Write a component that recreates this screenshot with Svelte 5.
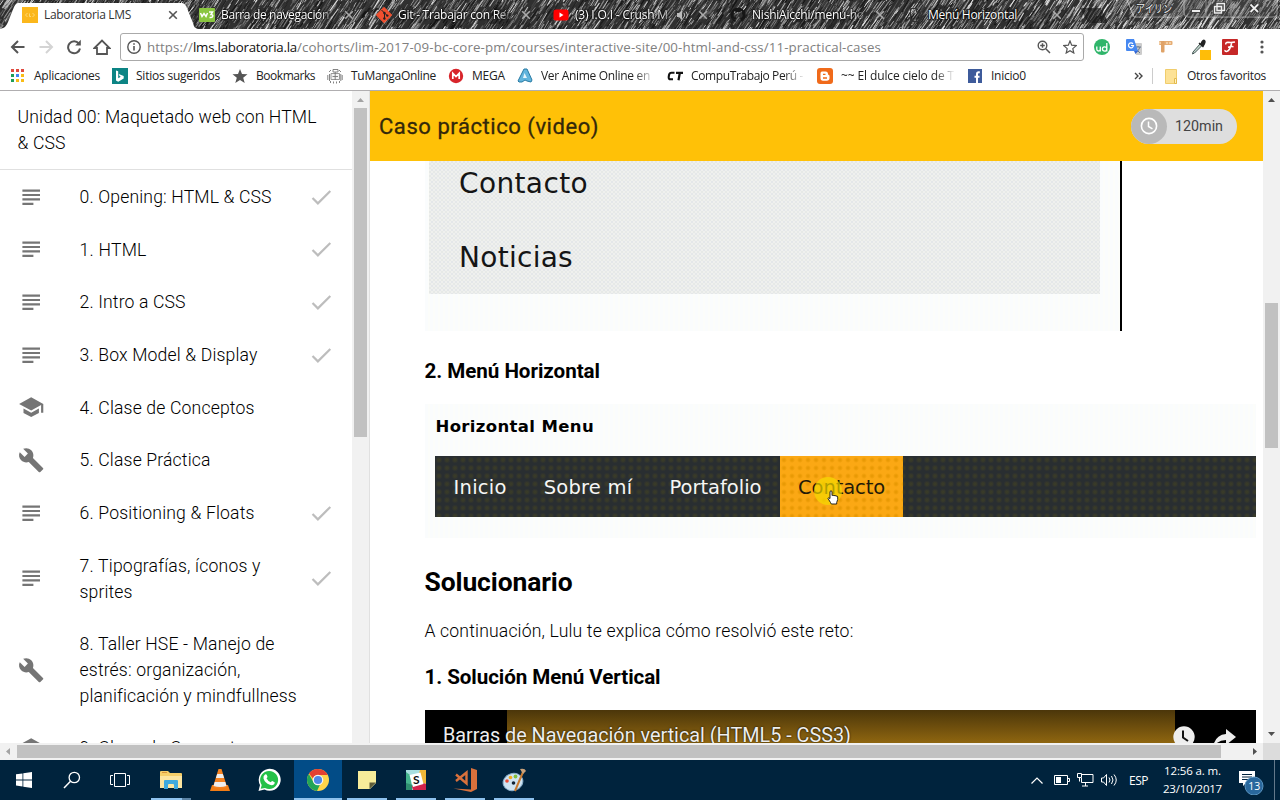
<script>
  const tabs = [
    { icon: 'lab', text: 'Laboratoria LMS', w: 87 },
    { icon: 'w3', text: 'Barra de navegación', w: 108 },
    { icon: 'git', text: 'Git - Trabajar con Rer', w: 113 },
    { icon: 'yt', text: '(3) I.O.I - Crush M', w: 93, sound: true },
    { icon: 'gh', text: 'NishiAicchi/menu-ho', w: 112 },
    { icon: 'doc', text: 'Menú Horizontal', w: 89 }
  ];
  const bookmarks = [
    { icon: 'apps', text: 'Aplicaciones', w: 66 },
    { icon: 'bing', text: 'Sitios sugeridos', w: 84 },
    { icon: 'star', text: 'Bookmarks', w: 59 },
    { icon: 'manga', text: 'TuMangaOnline', w: 85 },
    { icon: 'mega', text: 'MEGA', w: 33 },
    { icon: 'anime', text: 'Ver Anime Online en', w: 109, long: true },
    { icon: 'ct', text: 'CompuTrabajo Perú -', w: 112, long: true },
    { icon: 'blog', text: '~~ El dulce cielo de T', w: 113, long: true },
    { icon: 'fb', text: 'Inicio0', w: 35 }
  ];
  const lessons = [
    { icon: 'subject', done: true, lines: [['0. Opening: HTML & CSS', 192]] },
    { icon: 'subject', done: true, lines: [['1. HTML', 67]] },
    { icon: 'subject', done: true, lines: [['2. Intro a CSS', 106]] },
    { icon: 'subject', done: true, lines: [['3. Box Model & Display', 178]] },
    { icon: 'school', done: false, lines: [['4. Clase de Conceptos', 175]] },
    { icon: 'build', done: false, lines: [['5. Clase Práctica', 131]] },
    { icon: 'subject', done: true, lines: [['6. Positioning & Floats', 175]] },
    { icon: 'subject', done: true, lines: [['7. Tipografías, íconos y', 181], ['sprites', 53]] },
    { icon: 'build', done: false, lines: [['8. Taller HSE - Manejo de', 195], ['estrés: organización,', 161], ['planificación y mindfullness', 217]] },
    { icon: 'school', done: false, lines: [['9. Clase de Conceptos', 175]] }
  ];
  const paths = {
    subject: 'M14 17H4v2h10v-2zm6-8H4v2h16V9zM4 15h16v-2H4v2zM4 5v2h16V5H4z',
    school: 'M5 13.18v4L12 21l7-3.82v-4L12 17l-7-3.82zM12 3L1 9l11 6 9-4.91V17h2V9L12 3z',
    build: 'M22.7 19l-9.1-9.1c.9-2.3.4-5-1.5-6.900-2-2-5-2.400-7.400-1.300L9 6 6 9 1.600 4.700C.4 7.100.9 10.100 2.900 12.100c1.900 1.900 4.600 2.400 6.900 1.500l9.100 9.100c.4.4 1 .4 1.400 0l2.300-2.300c.5-.4.5-1.100.1-1.400z'
  };
  const demoMenu = [['Inicio', 53], ['Sobre mí', 88.500], ['Portafolio', 92], ['Contacto', 87]];
  const apps = ['explorer', 'vlc', 'whatsapp', 'chrome', 'notes', 'slack', 'code', 'paint'];
  const running = ['explorer', 'chrome', 'notes', 'slack', 'code', 'paint'];

  // Pencil-stroke texture of the window frame, from a small seeded generator.
  let seed = 7;
  const rnd = () => (seed = (seed * 16807) % 2147483647) / 2147483647;
  const strokes = Array.from({ length: 5600 }, () => {
    const x = rnd() * 1310 - 20;
    const y = rnd() * 44 - 2;
    const len = 3 + rnd() * 9;
    const edge = x > 1065 ? 0.6 : x < 40 ? 0.45 : 0;
    const v = Math.round(Math.min(240, 18 + (rnd() ** (1.8 - edge * 2)) * 222));
    const dy = len * (0.95 + rnd() * 0.35);
    return { d: `M${x.toFixed(1)} ${y.toFixed(1)}l${(len * 0.75).toFixed(1)} ${(-dy).toFixed(1)}`, c: `rgb(${v},${v},${v})`, w: (0.5 + rnd() * 0.7).toFixed(2) };
  });

  // Tracks a line of text so that it fills the given width.
  function fit(node, width) {
    const n = [...node.textContent].length;
    node.style.letterSpacing = (width - node.getBoundingClientRect().width) / n + 'px';
  }
</script>

<div class="screen">
  <div class="tabstrip">
    <svg class="texture" width="1280" height="29" viewBox="0 0 1280 29">
      <rect width="1280" height="29" fill="#303030" />
      {#each strokes as s}<path d={s.d} stroke={s.c} stroke-width={s.w} />{/each}
    </svg>
    <div class="tabs">
      {#each tabs as t, i}
        <div class="tab" class:active={i === 0}>
          {#if i === 0}
            <svg class="shape" width="198" height="29" viewBox="0 0 198 29"><path d="M0 29C5 28 6 26 8 22L14 7C16 3 17 3 20 3H181C184 3 185 4 187 8L193 23C194 26 194 28 198 29Z" fill="#fff" /></svg>
          {/if}
          <svg class="ico" width="16" height="16" viewBox="0 0 16 16">
            {#if t.icon === 'lab'}
              <rect width="16" height="16" fill="#fbb71c" /><path d="M5.500 6L3.500 8l2 2M10.500 6l2 2-2 2M7.500 6.500v3h1.500" fill="none" stroke="#ffe08a" stroke-width=".8" />
            {:else if t.icon === 'w3'}
              <rect width="16" height="14" y="1" rx="1" fill="#8ac640" /><path d="M1.500 6l1.500 3.500 2-3 2 3L8.500 6M10 5h3.500L12 7.500c3 0 2 3.500-1.500 3" fill="none" stroke="#fff" stroke-width="1.500" />
            {:else if t.icon === 'git'}
              <path d="M8 .3L15.700 8 8 15.700.3 8z" fill="#f1502f" stroke="#f1502f" stroke-linejoin="round" /><path d="M5.500 3l3 3v5.500M8.500 6l2.700 2.500" stroke="#222" fill="none" /><circle cx="8.400" cy="6" r="1.200" fill="#222" /><circle cx="8.400" cy="11.500" r="1.200" fill="#222" /><circle cx="11.300" cy="8.600" r="1.200" fill="#222" />
            {:else if t.icon === 'yt'}
              <rect x=".5" y="2.500" width="15" height="11" rx="2.500" fill="#f00" /><path d="M6.500 5.500v5L10.500 8z" fill="#fff" />
            {:else if t.icon === 'gh'}
              <path d="M8 .5a7.500 7.500 0 0 0-2.400 14.600v-2.200c-2 .3-2.500-1-3-1.500 1.200-.2 1.500 1.300 3 .8 0-.5.2-.9.500-1.100C3.500 10.800 2.800 8.500 4 6.300c-.2-.7-.2-1.400.1-2.100.8 0 1.400.4 2 .9 1.200-.3 2.600-.3 3.800 0 .6-.5 1.200-.9 2-.9.3.7.3 1.400.1 2.100 1.200 2.200.5 4.500-2.100 4.800.5.400.6 1 .6 1.600v2.400A7.500 7.500 0 0 0 8 .5z" fill="#161616" />
            {:else}
              <path d="M3.500 1.500h6l3.500 3.500v9.500H3.500zM9.500 1.500V5H13" fill="none" stroke="#333" />
            {/if}
          </svg>
          <div class="label" class:short={t.sound} class:whole={t.w < 100}><span use:fit={t.w}>{t.text}</span></div>
          {#if t.sound}
            <svg width="12" height="12" viewBox="0 0 12 12"><path d="M0 4h2l3-3v10L2 8H0z" fill="#bbb" /><path d="M7 4q1.500 2 0 4M9 2.500q3 3.500 0 7" stroke="#bbb" fill="none" /></svg>
          {/if}
          <svg class="x" width="10" height="10" viewBox="0 0 10 10"><path d="M1.200 1.200l7.600 7.600M8.800 1.200L1.200 8.800" stroke={i ? '#aaa' : '#555'} stroke-width="1.600" /></svg>
        </div>
      {/each}
    </div>
    <svg class="frame" width="216" height="29" viewBox="1064 0 216 29">
      <path d="M1080 8h19q2 0 3 2l5 11q1 2-2 2h-15q-2 0-3-2z" fill="#141414" opacity=".6" />
      <path d="M1127 0l7 17h42q6 0 8-3V0M1184 0v13q0 4 4 4h84q5 0 5-4V0M1206 0v17M1231 0v17" fill="none" stroke="#ddd" stroke-opacity=".65" />
      <path d="M1130 0h147v14q0 3-4 3h-136z" fill="#555" fill-opacity=".35" />
      <text x="1136" y="13" font-size="11" textLength="36" lengthAdjust="spacingAndGlyphs" font-family="Noto Sans CJK JP, sans-serif" fill="#eee" stroke="#333" stroke-width="2" paint-order="stroke">アイリン</text>
      <rect x="1191.500" y="9.500" width="9" height="3" fill="#eee" stroke="#444" />
      <path d="M1217 3.500h7.500v7h-7.500zM1214.500 6.500h7v6.500h-7z" fill="none" stroke="#333" stroke-width="3" /><path d="M1217 3.500h7.500v7h-7.500zM1214.500 6.500h7v6.500h-7z" fill="#555" stroke="#eee" stroke-width="1.400" />
      <path d="M1250.500 4.500l7.500 7.500M1258 4.500l-7.500 7.500" stroke="#333" stroke-width="4" /><path d="M1250.500 4.500l7.500 7.500M1258 4.500l-7.500 7.500" stroke="#eee" stroke-width="1.800" />
    </svg>
  </div>

  <div class="toolbar">
    <div class="nav">
      <svg width="16" height="16" viewBox="0 0 16 16"><path d="M14.500 8H2.500M8 2L2 8l6 6" /></svg>
      <svg class="off" width="16" height="16" viewBox="0 0 16 16"><path d="M1.500 8h12M8 2l6 6-6 6" /></svg>
      <svg width="16" height="16" viewBox="0 0 16 16"><path d="M12.800 4.500A6 6 0 1 0 14 9.500" /><path d="M14.800.8v5.700H9.200z" fill="#555" stroke="none" /></svg>
      <svg class="home" width="18" height="16" viewBox="0 0 18 16"><path d="M1.500 9L9 1.500 16.500 9H14v6H4V9z" stroke-width="1.800" /></svg>
    </div>
    <div class="omnibox">
      <svg width="14" height="14" viewBox="0 0 14 14"><circle cx="7" cy="7" r="6.200" fill="none" stroke="#555" stroke-width="1.400" /><path d="M7 6v4.500M7 3.300v1.500" stroke="#555" stroke-width="1.600" /></svg>
      <div class="url"><span use:fit={46}>https://</span><b use:fit={104}>lms.laboratoria.la</b><span use:fit={584}>/cohorts/lim-2017-09-bc-core-pm/courses/interactive-site/00-html-and-css/11-practical-cases</span></div>
      <svg width="14" height="14" viewBox="0 0 14 14"><circle cx="5.500" cy="5.500" r="4.300" fill="none" stroke="#555" stroke-width="1.400" /><path d="M8.800 8.800l4.200 4.200M3.200 5.500h4.600M5.500 3.200v4.600" stroke="#555" stroke-width="1.500" /></svg>
      <svg width="14" height="14" viewBox="0 0 14 14"><path d="M7 1l1.700 4.200 4.500.4-3.400 3 1 4.400L7 10.700 3.200 13l1-4.400-3.400-3 4.500-.4z" fill="none" stroke="#555" stroke-width="1.200" /></svg>
    </div>
    <div class="exts">
      <svg width="16" height="16" viewBox="0 0 16 16"><circle cx="8" cy="8" r="8" fill="#2fb56a" /><path d="M2.800 7.500v2.700q0 1.800 1.700 1.800T6.300 10.200V7.500v5M12.800 4v8.500M12.800 9.700a2.200 2.200 0 1 0-2.200 2.500q2.200 0 2.200-2.500" fill="none" stroke="#fff" stroke-width="1.300" /></svg>
      <svg width="16" height="16" viewBox="0 0 16 16"><path d="M6 4h9q1 0 1 1v10q0 1-1 1h-5z" fill="#ccc" /><path d="M9 8h6M12 7v1M14 8q-1 4-5 6M10 10l4 4" stroke="#68788e" fill="none" /><path d="M1 0h7l4 12H1q-1 0-1-1V1q0-1 1-1z" fill="#4688f1" /><path d="M7 4.800A2.500 2.500 0 1 0 7.500 6.500H5" fill="none" stroke="#fff" stroke-width="1.200" /><path d="M8 12h4l-2.500 3z" fill="#3367d6" /></svg>
      <svg width="16" height="16" viewBox="0 0 16 16"><rect x="1" y="2" width="13.500" height="4" rx="1" fill="#e6ad74" /><rect x="3" y="2" width="3.500" height="11.500" rx="1" fill="#dfa267" /><path d="M1 4h2M9 3v2M12 3v2" stroke="#fff0d5" /></svg>
      <svg width="20" height="22" viewBox="0 0 20 22"><path d="M1.500 15l.5-2 7-8 2 1.500-7.500 7.500z" fill="#c2d7cc" stroke="#455" /><path d="M8 4l4.500 4M10 5q2-4.500 3.500-3.500T12 7z" stroke="#222" stroke-width="1.500" fill="#222" /><rect x="9" y="11" width="11" height="10" fill="#ffbd08" /></svg>
      <svg width="16" height="16" viewBox="0 0 16 16"><rect width="16" height="16" rx="1" fill="#c62828" /><path d="M4 5.500q-1-2 2-2.200 4 .4 7-.3M9.800 3.500Q8 12 4.500 12.500 2.500 12.500 3.200 11M6 8.200q3-.8 5.500-.5" fill="none" stroke="#fff" stroke-width="1.500" /></svg>
      <svg width="4" height="14" viewBox="0 0 4 14"><circle cx="2" cy="2" r="1.600" fill="#555" /><circle cx="2" cy="7" r="1.600" fill="#555" /><circle cx="2" cy="12" r="1.600" fill="#555" /></svg>
    </div>
  </div>

  <div class="bookmarks">
    {#each bookmarks as b}
      <div class="bm">
        <svg width="16" height="16" viewBox="0 0 16 16">
          {#if b.icon === 'apps'}
            {#each [0, 1, 2] as r}{#each [0, 1, 2] as c}<rect x={1 + c * 5} y={1 + r * 5} width="3" height="3" fill={[['#e04a3f', '#e04a3f', '#e04a3f'], ['#1e9d58', '#4285f4', '#f9bc15'], ['#1e9d58', '#f9bc15', '#f9bc15']][r][c]} />{/each}{/each}
          {:else if b.icon === 'bing'}
            <rect width="16" height="16" fill="#0c8484" /><path d="M4 2.500l2.200.8v6.900l2.600-1.500-1.300-.6-.8-2 5 1.800v2.600l-5.500 3.200L4 12.500z" fill="#fff" />
          {:else if b.icon === 'star'}
            <path d="M8 1l2 5 5.500.3-4.300 3.400 1.500 5.300L8 12l-4.700 3 1.500-5.300L.5 6.300 6 6z" fill="#555" />
          {:else if b.icon === 'manga'}
            <path d="M4 5.500h8.500v6H4z" fill="#f4f4f4" stroke="#999" /><path d="M6 1.500h5v2.500H6zM.8 7v5M2.500 6v7M15.200 7v5M13.800 6v7M8.200 4v8M5.500 8.500h5.500M3.500 15v-2M6.500 15.500v-2M9.500 15.500v-2M12.500 15v-2M2 4l2-2M14 4l-2-2" stroke="#777" stroke-width=".9" fill="none" />
          {:else if b.icon === 'mega'}
            <circle cx="8" cy="8" r="7.200" fill="#d8252b" /><path d="M4.800 11V5.300L8 8.500l3.200-3.200V11" fill="none" stroke="#fff" stroke-width="1.700" />
          {:else if b.icon === 'anime'}
            <path d="M7 1h3l5 11-1 2-4-1-2-1-3 2H2l-1-1z" fill="#62b5dd" stroke="#287aa3" /><path d="M7.500 5L6 10h4z" fill="#e6f5fc" />
          {:else if b.icon === 'ct'}
            <path d="M7.500 4.800H4.500Q2.500 4.800 2 7l-.3 2.200Q1.500 11.200 3.500 11.200H6" fill="none" stroke="#111" stroke-width="2.100" /><path d="M9 4.800h7M12.800 5l-1.300 7.300" stroke="#111" stroke-width="2.200" />
          {:else if b.icon === 'blog'}
            <rect width="16" height="16" rx="3" fill="#f06a1a" /><path d="M5 3.500h3.500Q11 3.500 11 6q0 1 1.200 1.200.3 0 .3 1V10q0 2.800-2.800 2.800H6Q3.500 12.800 3.500 10V5.500q0-2 1.500-2z" fill="#fff" /><path d="M6 6.300h2.500M6 10h4" stroke="#f06a1a" stroke-width="1.300" />
          {:else}
            <rect x="1" y="1" width="14" height="14" fill="#3e5b9b" /><path d="M12.800 4.200h-1Q10 4.200 10 6v9M7.500 8.800h5" fill="none" stroke="#fff" stroke-width="2" />
          {/if}
        </svg>
        <div class="bmt" class:long={b.long}><span use:fit={b.w}>{b.text}</span></div>
      </div>
    {/each}
    <svg class="more" width="9" height="8" viewBox="0 0 9 8"><path d="M1 1l3 3-3 3M5 1l3 3-3 3" fill="none" stroke="#444" stroke-width="1.400" /></svg>
    <i class="sep"></i>
    <svg class="folder" width="12" height="15" viewBox="0 0 12 15"><path d="M.5 .5h11v14H.5z" fill="#fde296" stroke="#f0cd6c" /><path d="M9.500 9.500h2v5h-2z" fill="#fff3c6" stroke="#e3ba4d" /></svg>
    <span use:fit={79}>Otros favoritos</span>
  </div>

  <div class="page">
    <div class="side">
      <div class="unit"><div><span use:fit={299}>Unidad 00: Maquetado web con HTML</span></div><div><span use:fit={48}>& CSS</span></div></div>
      {#each lessons as l}
        <div class="lesson">
          <svg class="mi" viewBox="0 0 24 24"><path d={paths[l.icon]} fill="#757575" /></svg>
          <div class="lt">{#each l.lines as [t, w]}<div><span use:fit={w}>{t}</span></div>{/each}</div>
          {#if l.done}<svg class="mi" viewBox="0 0 24 24"><path d="M9 16.170L4.830 12l-1.420 1.410L9 19 21 7l-1.410-1.410z" fill="#bdbdbd" /></svg>{/if}
        </div>
      {/each}
    </div>
    <div class="vbar left"><svg width="7" height="4" viewBox="0 0 7 4"><path d="M0 4L3.500 0 7 4z" fill="#a3a3a3" /></svg><i></i></div>
    <div class="content">
      <header>
        <h1><span use:fit={220}>Caso práctico (video)</span></h1>
        <div class="chip">
          <div class="clock"><svg width="20" height="20" viewBox="0 0 20 20"><circle cx="10" cy="10" r="7.600" fill="none" stroke="#fff" stroke-width="1.600" /><path d="M9.500 5.500v5l4 2.300" fill="none" stroke="#fff" stroke-width="1.500" /></svg></div>
          <span use:fit={48}>120min</span>
        </div>
      </header>
      <article>
        <div class="shot1"><div class="vmenu"><div><span use:fit={129}>Contacto</span></div><div><span use:fit={114}>Noticias</span></div></div></div>
        <h3><span use:fit={175.500}>2. Menú Horizontal</span></h3>
        <div class="shot2">
          <div class="cap"><span use:fit={158.500}>Horizontal Menu</span></div>
          <div class="hmenu">
            {#each demoMenu as [t, w], i}<div class:hot={i === 3}><span use:fit={w}>{t}</span>
              {#if i === 3}
                <svg class="pointer" width="30" height="32" viewBox="0 0 30 32"><circle cx="14" cy="14" r="14" fill="#f4dc00" opacity=".68" /><path d="M16.500 25.500l-2.500-4q0-1.500 2 0V14.500q1-1.500 2 0v4q1-1 2 .2 1-.7 2 .3 1.500-.3 1.700 1v2.500l-1 3v1.500h-5.400z" fill="#fff" stroke="#111" stroke-width=".9" /></svg>
              {/if}
            </div>{/each}
          </div>
        </div>
        <h2><span use:fit={148}>Solucionario</span></h2>
        <p><span use:fit={429}>A continuación, Lulu te explica cómo resolvió este reto:</span></p>
        <h3 class="second"><span use:fit={236}>1. Solución Menú Vertical</span></h3>
        <div class="video">
          <div class="vt"><span use:fit={408}>Barras de Navegación vertical (HTML5 - CSS3)</span></div>
          <div class="va">
            <svg width="22" height="22" viewBox="0 0 22 22"><circle cx="11" cy="11" r="10.700" fill="#eee" /><path d="M10 4.500v7l5 3.500" fill="none" stroke="#111" stroke-width="2" /></svg>
            <svg width="23" height="20" viewBox="0 0 23 20"><path d="M13 1l10 8-10 8v-5Q5 12 0 19 2 7 13 6z" fill="#eee" /></svg>
          </div>
        </div>
      </article>
    </div>
    <div class="vbar right"><svg width="7" height="4" viewBox="0 0 7 4"><path d="M0 4L3.500 0 7 4z" fill="#505050" /></svg><i></i><svg width="7" height="4" viewBox="0 0 7 4"><path d="M0 0L3.500 4 7 0z" fill="#505050" /></svg></div>
  </div>

  <div class="hbar">
    <svg width="4" height="7" viewBox="0 0 4 7"><path d="M4 0L0 3.500 4 7z" fill="#a3a3a3" /></svg><i></i>
    <svg width="4" height="7" viewBox="0 0 4 7"><path d="M0 0L4 3.500 0 7z" fill="#505050" /></svg><b></b>
  </div>

  <div class="taskbar">
    <div class="sys"><svg width="16" height="16" viewBox="0 0 16 16"><path d="M0 2.300L6.500 1.400v6.100H0zM7.300 1.300L16 0v7.500H7.300zM0 8.400h6.500v6.100L0 13.600zM7.300 8.400H16V16l-8.700-1.300z" fill="#fff" /></svg></div>
    <div class="sys"><svg width="18" height="18" viewBox="0 0 18 18"><circle cx="11.300" cy="6.500" r="5.200" fill="none" stroke="#fff" stroke-width="1.300" /><path d="M7.500 10.300L1 17" stroke="#fff" stroke-width="1.500" /></svg></div>
    <div class="sys"><svg width="20" height="16" viewBox="0 0 20 16"><path d="M4.500 1.500h11v13h-11zM3 3.500H.5v9H3M17 3.500h2.500v9H17" fill="none" stroke="#fff" /></svg></div>
    <div class="apps">
      {#each apps as a}
        <div class="app" class:current={a === 'chrome'} class:run={running.includes(a)} class:multi={a === 'explorer'}>
          <svg width="24" height="24" viewBox="0 0 24 24">
            {#if a === 'explorer'}
              <path d="M1 4q0-1 1-1h7l2 2h11q1 0 1 1v14H1z" fill="#f5ce69" /><path d="M1 8h22v12H1z" fill="#fce5a0" /><path d="M3 4.500h5" stroke="#d8943c" /><path d="M5 21v-8q0-1 1-1h12q1 0 1 1v8h-4v-4q0-1-1-1h-4q-1 0-1 1v4z" fill="#3ea9de" />
            {:else if a === 'vlc'}
              <path d="M4 17h16l2 6H2z" fill="#f07c16" /><path d="M10.500 1h3L19 19q-7 3-14 0z" fill="#f58220" /><path d="M9.200 6h5.600l1.300 4H7.900zM6.700 14h10.600l1.200 4q-6.500 2-13 0z" fill="#eee" />
            {:else if a === 'whatsapp'}
              <path d="M1.500 23l1.500-6A11 11 0 1 1 7.500 21.500z" fill="#fff" /><path d="M3.700 20.800l1-3.700A9 9 0 1 1 8 20z" fill="#25c148" /><path d="M8 6.500q1.200-.8 1.700.3l.8 2q0 .7-1 1.500 1.500 3 4.300 4 1-1.200 1.500-1.200l2.300 1.200q.5.600-.5 2-1.800 1.500-4.300.5-5-2-6.300-6.300Q6 8 8 6.500z" fill="#fff" />
            {:else if a === 'chrome'}
              <circle cx="12" cy="12" r="11" fill="#ffd54b" /><path d="M12 1a11 11 0 0 1 9.800 6H12a5 5 0 0 0-4.800 3.800L3 5.500A11 11 0 0 1 12 1z" fill="#e34133" /><path d="M2.800 6l5 8.500q2 3.200 6 2.400L11 23A11 11 0 0 1 2.800 6z" fill="#21a558" /><circle cx="12" cy="12" r="5.300" fill="#f5f5f5" /><circle cx="12" cy="12" r="4.100" fill="#4d87e8" />
            {:else if a === 'notes'}
              <path d="M3 3h18v12l-6 6H3z" fill="#f6ec9a" /><path d="M21 14.500L14.500 21v-6.500z" fill="#5c5a38" />
            {:else if a === 'slack'}
              <path d="M2 2h20v20H2z" fill="#a8dfe0" /><path d="M2 4l4 3 2 13-6-2z" fill="#46b58e" /><path d="M2 15l7 2-1 5H2z" fill="#2f8f70" /><path d="M16 2h6v14l-4-1-3-10z" fill="#efb83a" /><path d="M8 18l11-3 3 1v6H9z" fill="#d4234c" /><path d="M5.500 7L16.500 4.500 19.500 16 9 19z" fill="#fff" /><text x="9" y="16.300" font-size="12" font-weight="700" font-family="Lato, sans-serif" fill="#111">S</text>
            {:else if a === 'code'}
              <path d="M18 0l6 2v19l-6 3L.5 20.500 18 21.500z" fill="#d9713c" /><path d="M3 6.500l10.500 9V4.500L3 13" fill="none" stroke="#d9713c" stroke-width="2.400" />
            {:else}
              <ellipse cx="11" cy="14" rx="10" ry="8.500" transform="rotate(-18 11 14)" fill="#cfe4f2" stroke="#89aecb" /><circle cx="5" cy="13" r="1.800" fill="#e94c35" /><circle cx="8.500" cy="9.500" r="1.800" fill="#f4a91f" /><circle cx="13.500" cy="8.500" r="1.900" fill="#7fbf3f" /><circle cx="11.500" cy="15" r="1.800" fill="#123" /><path d="M21 4L13 23" stroke="#c87a30" stroke-width="2" /><path d="M18 1q5-1 6 2l-3 3z" fill="#caa27a" />
            {/if}
          </svg>
        </div>
      {/each}
    </div>
    <div class="tray">
      <svg width="12" height="7" viewBox="0 0 12 7"><path d="M.5 6.500L6 1l5.500 5.500" fill="none" stroke="#fff" stroke-width="1.200" /></svg>
      <svg class="bat" width="16" height="10" viewBox="0 0 16 10"><path d="M.5.5h13v9H.5zM14 3.500h1.500v3H14" fill="none" stroke="#fff" /><path d="M2 2h5v6H2z" fill="#fff" /></svg>
      <svg class="net" width="17" height="14" viewBox="0 0 17 14"><path d="M5 1.500h11v8H4.500V5M5 13h6M8.500 9.500V13M.5.5h4v4h-4zM2.500 4.500v4" fill="none" stroke="#fff" /></svg>
      <svg class="vol" width="17" height="14" viewBox="0 0 17 14"><path d="M.5 5h2l3-3.500v11L2.500 9h-2z" fill="none" stroke="#fff" /><path d="M8 4.500q2 2.500 0 5M10.500 3q3 4 0 8M13 1.500q4.500 5.500 0 11" fill="none" stroke="#fff" /></svg>
      <span class="esp"><span use:fit={19}>ESP</span></span>
      <div class="date"><div><span use:fit={57}>12:56 a. m.</span></div><div><span use:fit={59}>23/10/2017</span></div></div>
      <svg class="notif" width="26" height="26" viewBox="0 0 26 26"><path d="M1 2h16v12H8l-3 3v-3H1z" fill="#fff" /><path d="M4 5.500h10M4 8h10M4 10.500h6" stroke="#00233d" /><circle cx="16" cy="17" r="9" fill="#29689d" stroke="#5a95c2" /><text x="10.300" y="21" font-size="10.500" font-family="Open Sans, sans-serif" fill="#fff">13</text></svg>
      <i class="edge"></i>
    </div>
  </div>
</div>

<style>
  :global(body) { margin: 0; overflow: hidden; }
  .screen { width: 1280px; height: 800px; display: flex; flex-direction: column; background: #fff; overflow: hidden; font-family: "Open Sans", "Noto Sans", sans-serif; font-size: 12px; color: #222; }
  .screen * { box-sizing: border-box; }
  svg { display: block; flex: none; }
  span, b { white-space: pre; }
  .tabstrip { position: relative; height: 29px; flex: none; overflow: hidden; }
  .texture { position: absolute; inset: 0; }
  .frame { position: absolute; right: 0; top: 0; }
  .tabs { position: relative; display: flex; height: 29px; }
  .tab { position: relative; width: 177px; padding: 1px 0 0 22px; display: flex; align-items: center; color: #fff; text-shadow: 0 0 2px #000, 0 0 2px #000, 0 0 3px #000; }
  .tab.active { color: #333; text-shadow: none; }
  .shape { position: absolute; left: 0; top: 0; }
  .ico, .x, .label { position: relative; }
  .label { width: 114px; margin-left: 6px; overflow: hidden; line-height: 20px; -webkit-mask-image: linear-gradient(90deg, #000 86%, transparent); }
  .label.whole { -webkit-mask-image: none; }
  .label.short { width: 94px; margin-right: 8px; -webkit-mask-image: linear-gradient(90deg, #000 86%, rgba(0, 0, 0, .4)); }
  .tab:last-child .label { margin-left: 5px; }
  .x { margin-left: auto; margin-right: 0; }
  .active .x { margin-right: -1px; }
  .toolbar { height: 36px; flex: none; display: flex; align-items: center; background: #fff; }
  .nav { width: 120px; padding-left: 10px; display: flex; gap: 12px; }
  .nav svg { fill: none; stroke: #555; stroke-width: 2; }
  .nav .off { stroke: #d4d4d4; }
  .nav .home { margin-left: -1px; }
  .omnibox { width: 964px; height: 28px; border: 1px solid #aaa; border-radius: 3px; display: flex; align-items: center; padding: 0 6px; }
  .url { flex: 1; margin-left: 6px; display: flex; font-size: 13.300px; color: #808080; line-height: 20px; }
  .url b { font-weight: 400; color: #111; }
  .omnibox > svg:last-child { margin-left: 12px; }
  .exts { display: flex; align-items: center; padding-left: 10px; gap: 16px; }
  .exts svg:nth-child(4) { margin: 6px -5px 0 1px; }
  .exts svg:nth-child(6) { margin-left: 6px; }
  .bookmarks { height: 26px; flex: none; display: flex; align-items: center; padding: 0 14px 4px 10px; line-height: 20px; }
  .bm { display: flex; align-items: center; gap: 8px; margin-right: 12px; }
  .bmt.long { width: 114px; overflow: hidden; -webkit-mask-image: linear-gradient(90deg, #000 82%, transparent); }
  .more { margin-left: auto; }
  .sep { width: 1px; height: 16px; background: #ccc; margin: 0 12px 0 9px; }
  .folder { margin-right: 10px; }
  .page { height: 653px; margin-top: -1px; flex: none; display: flex; border-top: 1px solid #b0aeb0; font-family: Roboto, sans-serif; }
  .side { width: 352px; flex: none; overflow: hidden; font-size: 17.600px; font-weight: 300; line-height: 26px; color: #000; }
  .unit { height: 79px; padding: 13px 17.600px; border-bottom: 1px solid #e0e0e0; margin-bottom: .6px; }
  .lesson { display: flex; align-items: center; padding: 13.150px 17.600px; min-height: 52.700px; }
  .mi { width: 26.400px; height: 26.400px; }
  .lt { width: 228px; margin: 0 0.600px 0 35.600px; }
  .vbar { width: 17px; flex: none; background: #f1f1f1; display: flex; flex-direction: column; align-items: center; padding-top: 7px; }
  .vbar i { width: 13px; background: #c1c1c1; }
  .left i { height: 329px; margin-top: 6px; }
  .right i { height: 145px; margin-top: 201px; }
  .right svg:last-child { margin-top: auto; margin-bottom: 7px; }
  .content { width: 894px; flex: none; border-left: 1px solid #e0e0e0; overflow: hidden; }
  header { height: 70px; background: #ffc107; display: flex; align-items: center; justify-content: space-between; padding: 0 26px 0 9px; }
  h1 { margin: 0; font-size: 22px; font-weight: 400; color: #33280a; -webkit-text-stroke: .3px #33280a; }
  .chip { width: 106px; height: 35px; border-radius: 18px; background: #dedede; display: flex; align-items: center; font-size: 14.300px; color: #444; }
  .clock { width: 36px; height: 35px; border-radius: 50%; background: #b9b9b9; display: grid; place-items: center; margin-right: 8px; }
  article { padding-left: 54.500px; color: #000; }
  .shot1 { width: 697px; height: 170px; margin-left: .5px; border-right: 2px solid #000; padding-left: 4px; background: repeating-linear-gradient(90deg, #fafcfd 0 3px, #fcfdfa 3px 5px); font-family: "DejaVu Sans", sans-serif; font-size: 28px; color: #151515; }
  .vmenu { width: 671px; height: 133px; padding-left: 30px; background: conic-gradient(#e4e7e9 25%, #eff0ee 0 50%, #e6e9e7 0 75%, #eff0ee 0) 0 0 / 4px 4px; }
  .vmenu div { height: 74px; line-height: 46px; }
  h3 { margin: 24px 0 0; height: 32px; line-height: 32px; font-size: 20.600px; font-weight: 700; }
  .shot2 { width: 831px; height: 134px; margin: 17px 0 0 .5px; padding-left: 10px; background: repeating-linear-gradient(90deg, #fafcfd 0 3px, #fcfdfa 3px 5px); font-family: "DejaVu Sans", sans-serif; }
  .cap { height: 52px; line-height: 46px; padding-left: .5px; font-size: 16.500px; font-weight: 700; }
  .hmenu { height: 61px; display: flex; font-size: 19.500px; line-height: 63px; color: #f6f6f6; background: radial-gradient(circle, rgba(70, 68, 34, .55) 0 1px, transparent 3.500px) 0 0 / 8px 8px, #292e31; }
  .hmenu div { position: relative; height: 61px; padding: 0 18.600px; }
  .hmenu .hot { width: 123px; padding-left: 18px; color: #241a08; background: radial-gradient(circle, #e99a05 0 1px, transparent 3px) 0 0 / 8px 8px, #fba814; }
  .pointer { position: absolute; left: 34px; top: 21px; }
  h2 { margin: 24px 0 0; height: 40px; line-height: 40px; font-size: 26.400px; font-weight: 700; }
  p { margin: 16px 0 0; height: 26px; line-height: 26px; font-size: 17.600px; font-weight: 300; }
  h3.second { margin-top: 17px; }
  .video { width: 831px; height: 60px; margin: 17px 0 0 .5px; padding: 12px 20px 0 18px; display: flex; justify-content: space-between; background: linear-gradient(#4b360a, #956a10 36px) 82px 0 / 668px 60px no-repeat, #000; color: #eee; }
  .vt { font-size: 19.800px; line-height: 28px; text-shadow: 0 0 2px #000; }
  .va { display: flex; gap: 18px; padding-top: 4px; }
  .va svg:last-child { margin-top: 2px; }
  .hbar { height: 17px; flex: none; display: flex; align-items: center; background: #f1f1f1; padding-left: 6px; }
  .hbar i { width: 1204px; height: 13px; margin: 0 32px 0 7px; background: #c1c1c1; }
  .hbar b { width: 17px; height: 17px; margin-left: auto; background: #dcdcdc; }
  .taskbar { height: 40px; flex: none; display: flex; background: #00233d; color: #fff; }
  .sys { width: 48px; display: grid; place-items: center; }
  .apps { display: flex; gap: 1px; margin-left: 3px; }
  .app { position: relative; width: 48px; display: grid; place-items: center; }
  .current { background: #024c87; }
  .run::after { content: ""; position: absolute; left: 4px; right: 4px; bottom: 0; height: 2px; background: #8ec2ee; }
  .current::after { left: 0; right: 0; }
  .multi::after { background: linear-gradient(90deg, #8ec2ee 31px, #5b83a5 31px); }
  .tray { margin-left: auto; width: 249px; display: flex; align-items: center; }
  .bat { margin-left: 11px; }
  .net { margin-left: 7px; }
  .vol { margin-left: 7px; }
  .esp { margin-left: 11px; width: 19px; }
  .date { margin-left: 15px; width: 59px; line-height: 18px; text-align: center; font-size: 11.500px; }
  .notif { margin: 4px 0 0 16px; }
  .edge { width: 1px; height: 40px; margin-left: 10px; background: #63788a; }
</style>
